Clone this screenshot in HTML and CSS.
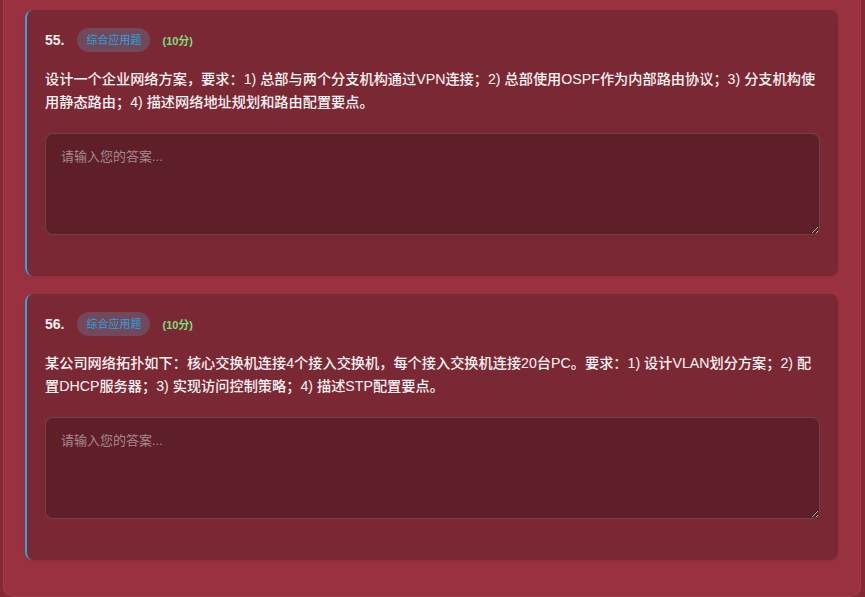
FILE: index.html
```html
<!DOCTYPE html>
<html lang="zh-CN">
<head>
    <meta charset="UTF-8">
    <meta name="viewport" content="width=device-width, initial-scale=1.0">
    <title>综合应用题</title>
    <link rel="stylesheet" href="styles.css">
</head>
<body>
    <div class="exam-section">
        <div class="question-card">
            <div class="question-header">
                <span class="question-number">55.</span>
                <span class="question-type">综合应用题</span>
                <span class="question-score">(10分)</span>
            </div>
            <p class="question-text">设计一个企业网络方案，要求：1) 总部与两个分支机构通过VPN连接；2) 总部使用OSPF作为内部路由协议；3) 分支机构使用静态路由；4) 描述网络地址规划和路由配置要点。</p>
            <textarea class="answer-input" placeholder="请输入您的答案..."></textarea>
        </div>

        <div class="question-card">
            <div class="question-header">
                <span class="question-number">56.</span>
                <span class="question-type">综合应用题</span>
                <span class="question-score">(10分)</span>
            </div>
            <p class="question-text">某公司网络拓扑如下：核心交换机连接4个接入交换机，每个接入交换机连接20台PC。要求：1) 设计VLAN划分方案；2) 配置DHCP服务器；3) 实现访问控制策略；4) 描述STP配置要点。</p>
            <textarea class="answer-input" placeholder="请输入您的答案..."></textarea>
        </div>
    </div>
</body>
</html>
```

FILE: styles.css
```css
/* Reset and basic layout */
* {
    margin: 0;
    padding: 0;
    box-sizing: border-box;
}

body {
    font-family: "Liberation Sans", "Noto Sans CJK SC", sans-serif;
    background-color: #862834;
    height: 597px;
    overflow: hidden;
    padding: 0 4px 0 3px;
}

.exam-section {
    background-color: #9a3141;
    border: 1px solid rgba(255, 255, 255, 0.06);
    border-top: none;
    border-radius: 0 0 10px 10px;
    padding: 10px 22px 36px 21px;
    display: flex;
    flex-direction: column;
    gap: 18px;
}

.question-card {
    background-color: #7a2834;
    border-left: 2px solid #3a9fd2;
    border-radius: 8px;
    padding: 18px 18px 41px 18px;
    box-shadow: 0 1px 3px rgba(0, 0, 0, 0.08);
}

.question-header {
    display: flex;
    align-items: center;
    gap: 12px;
    height: 24px;
}

.question-number {
    color: #f4eef0;
    font-weight: 700;
    font-size: 14px;
    margin-right: 1px;
}

.question-type {
    background-color: rgba(105, 110, 145, 0.45);
    color: #29a3dc;
    font-size: 11px;
    padding: 3px 9px;
    border-radius: 12px;
    line-height: 18px;
}

.question-score {
    color: #7fdc7f;
    font-size: 11px;
    font-weight: 700;
}

.question-text {
    color: #fbf3f4;
    font-size: 14.2px;
    font-weight: 500;
    line-height: 23px;
    margin: 16px 0 19px;
}

.answer-input {
    display: block;
    width: 100%;
    height: 102px;
    background-color: #5e1f28;
    border: 1px solid rgba(255, 255, 255, 0.14);
    border-radius: 8px;
    padding: 12px 15px;
    color: #f0e6e8;
    font-family: "Liberation Sans", "Noto Sans CJK SC", sans-serif;
    font-size: 13px;
    resize: vertical;
}

.answer-input::placeholder {
    color: #a68990;
}
```
